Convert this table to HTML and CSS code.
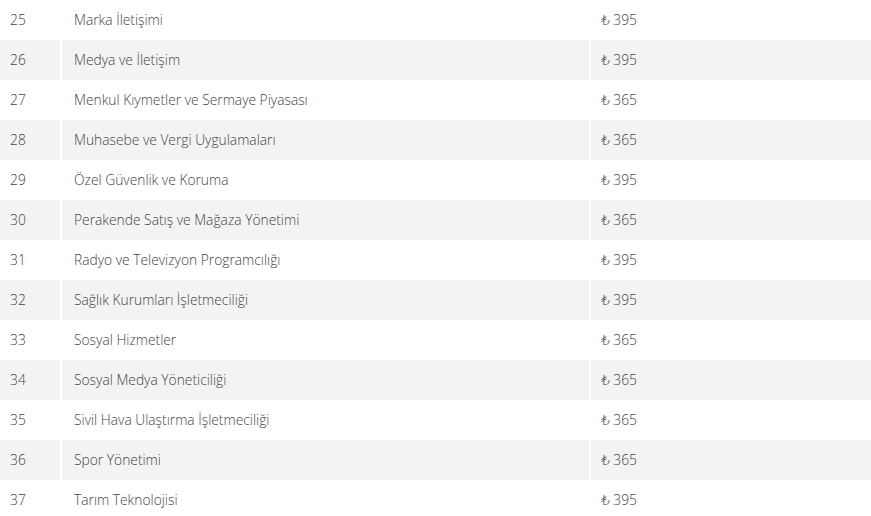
FILE: index.html
```html
<!DOCTYPE html>
<html lang="tr">
<head>
<meta charset="utf-8">
<link rel="stylesheet" href="styles.css">
</head>
<body>
<table class="fees">
<colgroup><col class="c-no"><col class="c-name"><col class="c-price"></colgroup>
<tbody>
<tr><td>25</td><td>Marka İletişimi</td><td>₺ 395</td></tr>
<tr><td>26</td><td>Medya ve İletişim</td><td>₺ 395</td></tr>
<tr><td>27</td><td>Menkul Kıymetler ve Sermaye Piyasası</td><td>₺ 365</td></tr>
<tr><td>28</td><td>Muhasebe ve Vergi Uygulamaları</td><td>₺ 365</td></tr>
<tr><td>29</td><td>Özel Güvenlik ve Koruma</td><td>₺ 395</td></tr>
<tr><td>30</td><td>Perakende Satış ve Mağaza Yönetimi</td><td>₺ 365</td></tr>
<tr><td>31</td><td>Radyo ve Televizyon Programcılığı</td><td>₺ 395</td></tr>
<tr><td>32</td><td>Sağlık Kurumları İşletmeciliği</td><td>₺ 395</td></tr>
<tr><td>33</td><td>Sosyal Hizmetler</td><td>₺ 365</td></tr>
<tr><td>34</td><td>Sosyal Medya Yöneticiliği</td><td>₺ 365</td></tr>
<tr><td>35</td><td>Sivil Hava Ulaştırma İşletmeciliği</td><td>₺ 365</td></tr>
<tr><td>36</td><td>Spor Yönetimi</td><td>₺ 365</td></tr>
<tr><td>37</td><td>Tarım Teknolojisi</td><td>₺ 395</td></tr>
</tbody>
</table>
</body>
</html>
```
FILE: styles.css
```css
html, body { margin: 0; padding: 0; background: #fff; }
body { font-family: "Open Sans", "DejaVu Sans", sans-serif; font-weight: 300; color: #444; font-size: 13.8px; }
.fees { width: 871px; border-collapse: collapse; table-layout: fixed; }
.c-no { width: 61px; }
.c-name { width: 529px; }
.c-price { width: 281px; }
.fees td { height: 40px; padding: 0 0 1px 10px; box-sizing: border-box; vertical-align: middle; border-right: 2px solid #fff; white-space: nowrap; }
.fees td:nth-child(2) { padding-left: 12px; }
.fees td:last-child { border-right: 0; }
.fees tr:nth-child(even) td { background: #f3f3f3; }
```
